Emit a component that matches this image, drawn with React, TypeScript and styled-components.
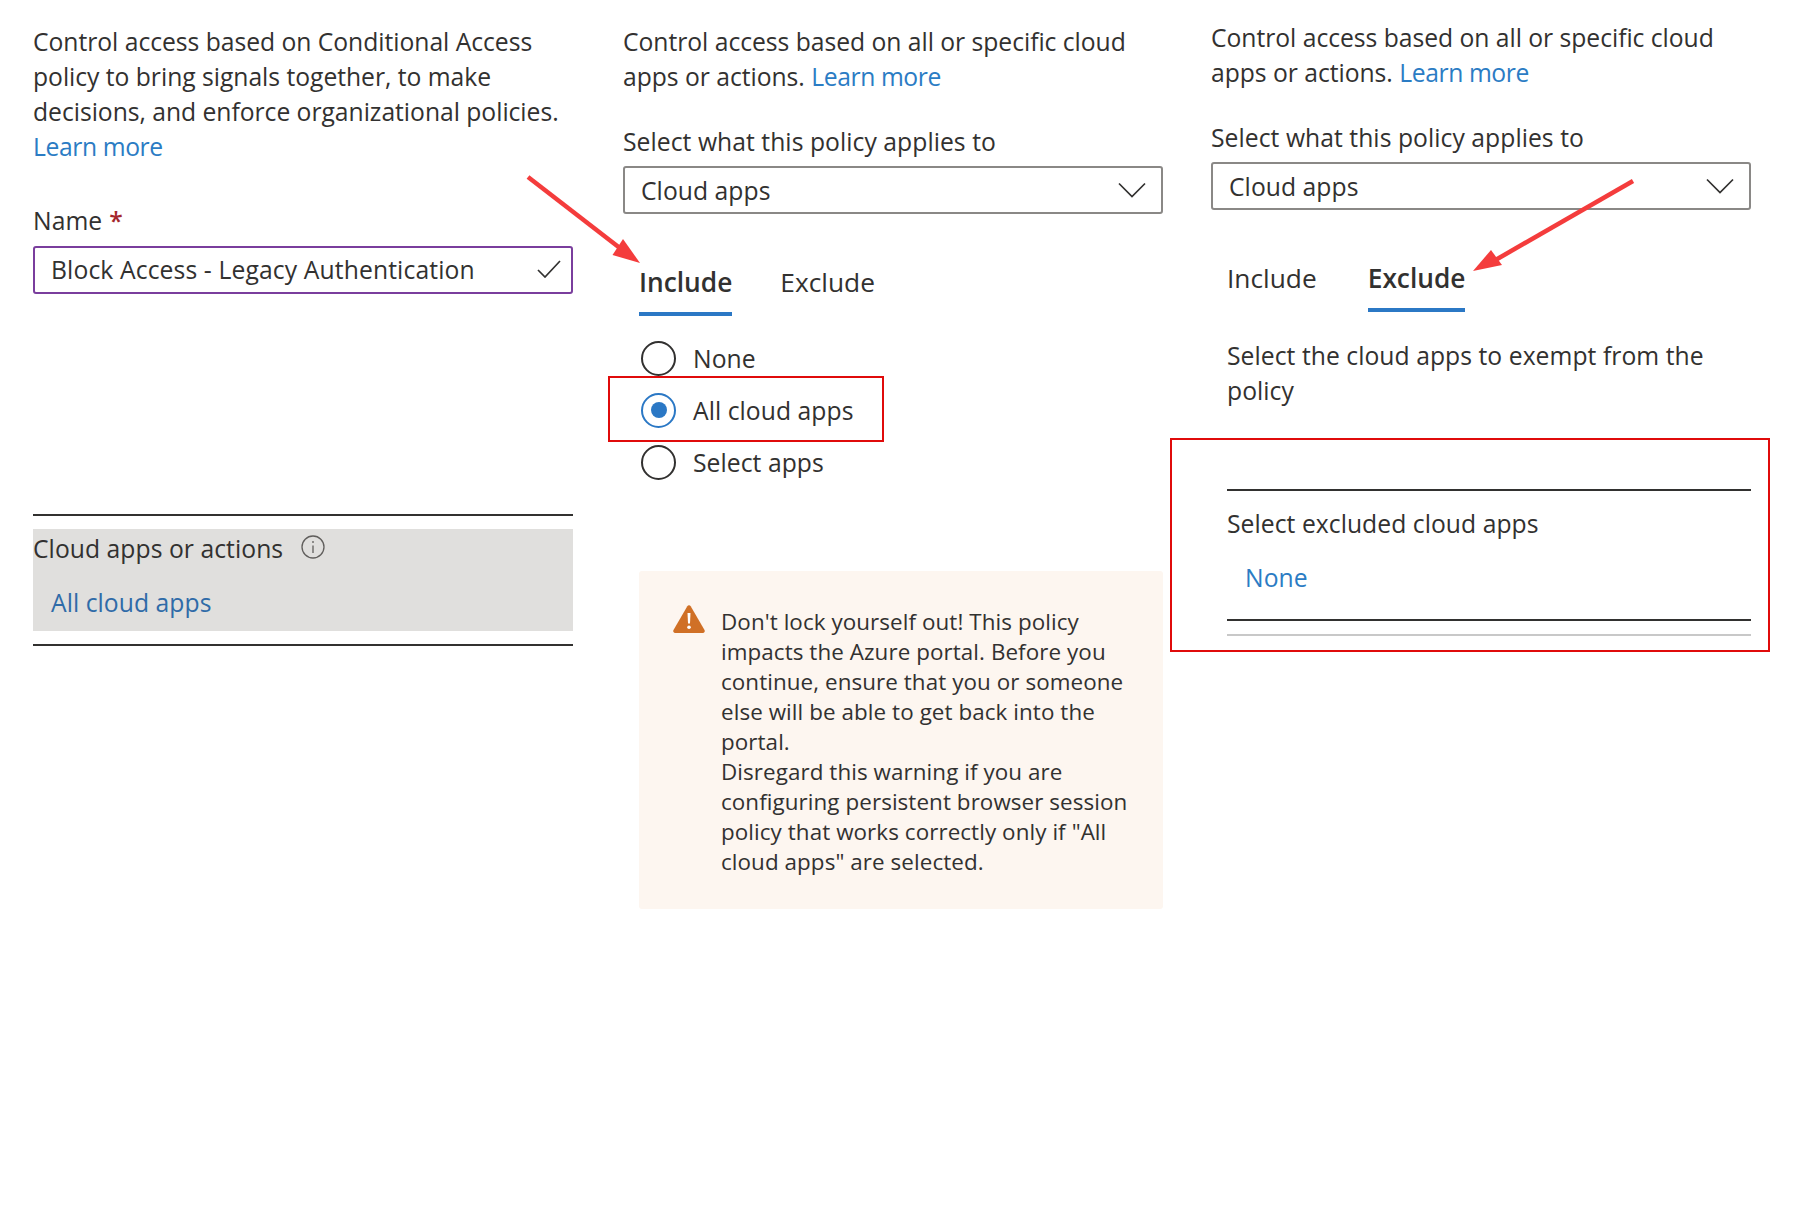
import React from "react";
import styled, { createGlobalStyle } from "styled-components";

const Global = createGlobalStyle`
  html, body { margin: 0; padding: 0; background: #fff; }
  body { font-family: "Open Sans", "Noto Sans", sans-serif; color: #323130; }
`;

const Page = styled.div`
  position: relative;
  width: 1794px;
  height: 1225px;
  overflow: hidden;
  background: #fff;
`;
const Columns = styled.div`
  display: grid;
  grid-template-columns: 540px 540px 540px;
  column-gap: 50px;
  padding-left: 33px;
  align-items: start;
`;
const Column = styled.section<{ $top: number; $shift?: number }>`
  padding-top: ${(p) => p.$top}px;
  margin-left: ${(p) => p.$shift ?? 0}px;
  width: 540px;
  font-size: 24.7px;
  line-height: 35px;
  letter-spacing: 0.05px;
`;
const Para = styled.p`
  margin: 0;
  white-space: nowrap;
  letter-spacing: -0.03px;
`;
const Link = styled.a`
  color: #2b7cc4;
  letter-spacing: -0.4px;
`;
const FieldLabel = styled.div<{ $gap: number }>`
  margin-top: ${(p) => p.$gap}px;
  white-space: nowrap;
`;
const Star = styled.span`
  color: #a4262c;
  font-weight: 600;
  margin-left: 7px;
`;
const Field = styled.div<{ $accent?: boolean }>`
  box-sizing: border-box;
  height: 48px;
  margin-top: ${(p) => (p.$accent ? "8px" : "7px")};
  padding: 0 ${(p) => (p.$accent ? "10px" : "15px")} ${(p) => (p.$accent ? "2px" : "0")} 16px;
  letter-spacing: ${(p) => (p.$accent ? "0.12px" : "0.05px")};
  display: flex;
  align-items: center;
  justify-content: space-between;
  border: 2px solid ${(p) => (p.$accent ? "#7a3e9d" : "#8a8886")};
  border-radius: 3px;
  width: 540px;
`;
const Glyph = styled.svg`
  display: block;
  flex: none;
`;
const InfoGlyph = styled(Glyph)`
  margin-top: -3px;
`;
const Rule = styled.div<{ $top: number }>`
  height: 2px;
  background: #323130;
  margin-top: ${(p) => p.$top}px;
`;
const GreyRule = styled.div`
  height: 2px;
  background: #c8c8c8;
  margin-top: 13px;
`;
const SummaryCard = styled.div`
  margin-top: 13px;
  height: 102px;
  padding-top: 2px;
  box-sizing: border-box;
  background: #e0dfdd;
`;
const SummaryTitle = styled.div`
  display: flex;
  align-items: center;
  gap: 18px;
`;
const SummaryValue = styled.div`
  color: #2f6ba8;
  margin: 19px 0 0 18px;
`;
const Tabs = styled.div<{ $gap: number; $left: number }>`
  display: flex;
  gap: ${(p) => p.$gap}px;
  margin: 51px 0 0 ${(p) => p.$left}px;
`;
const Tab = styled.div<{ $active?: boolean }>`
  padding-bottom: 12px;
  font-size: 26.3px;
  letter-spacing: 0;
  border-bottom: 4px solid ${(p) => (p.$active ? "#2b78c5" : "transparent")};
  font-weight: ${(p) => (p.$active ? 600 : 400)};
`;
const RadioGroup = styled.div`
  margin: 16px 0 0 18px;
`;
const RadioRow = styled.div`
  height: 52px;
  display: flex;
  align-items: center;
  gap: 17px;
`;
const RadioMark = styled.span<{ $on?: boolean }>`
  box-sizing: border-box;
  width: 35px;
  height: 35px;
  border-radius: 50%;
  display: flex;
  align-items: center;
  justify-content: center;
  border: 2px solid ${(p) => (p.$on ? "#2b78c5" : "#323130")};
  &::after {
    content: "";
    width: 16px;
    height: 16px;
    border-radius: 50%;
    background: ${(p) => (p.$on ? "#2b78c5" : "transparent")};
  }
`;
const Warning = styled.div`
  box-sizing: border-box;
  display: flex;
  gap: 16px;
  margin: 83px 0 0 16px;
  width: 524px;
  height: 338px;
  padding: 36px 0 0 34px;
  background: #fdf6f0;
  border-radius: 3px;
`;
const WarningIcon = styled.svg`
  flex: none;
  margin-top: -2px;
`;
const WarningText = styled.p`
  margin: 0;
  font-size: 22.4px;
  line-height: 30px;
  letter-spacing: 0.08px;
  white-space: nowrap;
`;
const Description = styled.p`
  margin: 26px 0 0 16px;
  white-space: nowrap;
`;
const ExcludedPanel = styled.div`
  margin: 81px 0 0 16px;
  width: 524px;
`;
const ExcludedLabel = styled.div`
  margin-top: 15px;
`;
const ExcludedValue = styled.div`
  color: #2b7cc4;
  margin: 19px 0 24px 18px;
`;
const Highlight = styled.div`
  position: absolute;
  box-sizing: border-box;
  border: 2px solid #e00b0b;
`;
const RadioHighlight = styled(Highlight)`
  left: 608px;
  top: 376px;
  width: 276px;
  height: 66px;
`;
const PanelHighlight = styled(Highlight)`
  left: 1170px;
  top: 438px;
  width: 600px;
  height: 214px;
`;
const Arrows = styled.svg`
  position: absolute;
  inset: 0;
  pointer-events: none;
`;

const Chevron = () => (
  <Glyph width="28" height="16" viewBox="0 0 28 16" fill="none" stroke="#323130" strokeWidth="1.7">
    <path d="M1 1.5 L14 14.5 L27 1.5" />
  </Glyph>
);

export default function App() {
  return (
    <Page>
      <Global />
      <Columns>
        <Column $top={24}>
          <Para>
            Control access based on Conditional Access
            <br />
            policy to bring signals together, to make
            <br />
            decisions, and enforce organizational policies.
            <br />
            <Link>Learn more</Link>
          </Para>
          <FieldLabel $gap={39}>
            Name<Star>*</Star>
          </FieldLabel>
          <Field $accent>
            <span>Block Access - Legacy Authentication</span>
            <Glyph width="24" height="18" viewBox="0 0 24 18" fill="none" stroke="#323130" strokeWidth="1.7">
              <path d="M1 10 L8 17 L23 1" />
            </Glyph>
          </Field>
          <Rule $top={220} />
          <SummaryCard>
            <SummaryTitle>
              <span>Cloud apps or actions</span>
              <InfoGlyph width="24" height="24" viewBox="0 0 24 24" fill="none" stroke="#605e5c" strokeWidth="1.3">
                <circle cx="12" cy="12" r="11" />
                <path d="M12 10.5 V18 M12 6 V8" />
              </InfoGlyph>
            </SummaryTitle>
            <SummaryValue>All cloud apps</SummaryValue>
          </SummaryCard>
          <Rule $top={13} />
        </Column>

        <Column $top={24}>
          <Para>
            Control access based on all or specific cloud
            <br />
            apps or actions. <Link>Learn more</Link>
          </Para>
          <FieldLabel $gap={30}>Select what this policy applies to</FieldLabel>
          <Field>
            <span>Cloud apps</span>
            <Chevron />
          </Field>
          <Tabs $gap={48} $left={16}>
            <Tab $active>Include</Tab>
            <Tab>Exclude</Tab>
          </Tabs>
          <RadioGroup>
            <RadioRow>
              <RadioMark />
              <span>None</span>
            </RadioRow>
            <RadioRow>
              <RadioMark $on />
              <span>All cloud apps</span>
            </RadioRow>
            <RadioRow>
              <RadioMark />
              <span>Select apps</span>
            </RadioRow>
          </RadioGroup>
          <Warning>
            <WarningIcon width="32" height="28" viewBox="0 0 32 28">
              <path
                fill="#d07026"
                d="M14.3 1.2a2 2 0 0 1 3.4 0l13.8 23.7a2 2 0 0 1-1.7 3H2.2a2 2 0 0 1-1.7-3z"
              />
              <path fill="#fff" d="M14.5 8h3l-.5 10.5h-2z" />
              <circle cx="16" cy="22.3" r="1.8" fill="#fff" />
            </WarningIcon>
            <WarningText>
              Don't lock yourself out! This policy
              <br />
              impacts the Azure portal. Before you
              <br />
              continue, ensure that you or someone
              <br />
              else will be able to get back into the
              <br />
              portal.
              <br />
              Disregard this warning if you are
              <br />
              configuring persistent browser session
              <br />
              policy that works correctly only if "All
              <br />
              cloud apps" are selected.
            </WarningText>
          </Warning>
        </Column>

        <Column $top={20} $shift={-2}>
          <Para>
            Control access based on all or specific cloud
            <br />
            apps or actions. <Link>Learn more</Link>
          </Para>
          <FieldLabel $gap={30}>Select what this policy applies to</FieldLabel>
          <Field>
            <span>Cloud apps</span>
            <Chevron />
          </Field>
          <Tabs $gap={51} $left={16}>
            <Tab>Include</Tab>
            <Tab $active>Exclude</Tab>
          </Tabs>
          <Description>
            Select the cloud apps to exempt from the
            <br />
            policy
          </Description>
          <ExcludedPanel>
            <Rule $top={0} />
            <ExcludedLabel>Select excluded cloud apps</ExcludedLabel>
            <ExcludedValue>None</ExcludedValue>
            <Rule $top={0} />
            <GreyRule />
          </ExcludedPanel>
        </Column>
      </Columns>

      <RadioHighlight />
      <PanelHighlight />
      <Arrows width="1794" height="1225" viewBox="0 0 1794 1225">
        <path d="M528 177 L625 252" stroke="#f43c3c" strokeWidth="4.5" fill="none" />
        <path d="M640 263 L623 239 L612.5 255 Z" fill="#f43c3c" />
        <path d="M1633 181 L1492 262" stroke="#f43c3c" strokeWidth="4.5" fill="none" />
        <path d="M1473 271 L1491 250 L1502 265 Z" fill="#f43c3c" />
      </Arrows>
    </Page>
  );
}
